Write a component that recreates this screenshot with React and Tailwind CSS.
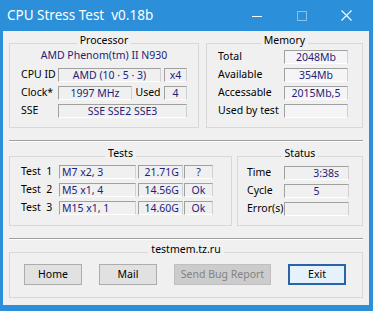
import React from 'react';

const Field = ({ className = '', children }) => (
  <div
    className={`h-[14px] border border-t-[#a0a0a0] border-l-[#a0a0a0] border-r-[#d0d0d0] border-b-white leading-[12px] text-[#1e1e78] whitespace-nowrap overflow-hidden ${className}`}
  >
    {children}
  </div>
);

const Group = ({ title, className = '', children }) => (
  <div className={`border border-[#d8d8d8] ${className}`}>
    <div className="-mt-[11px] mx-auto w-fit bg-[#f0f0f0] px-[3px] leading-[14px] text-black">{title}</div>
    {children}
  </div>
);

const Separator = ({ className = '' }) => (
  <div className={`h-[2px] border-t border-t-[#a0a0a0] border-b border-b-white ${className}`} />
);

const Button = ({ className = '', children }) => (
  <div className={`h-[21px] flex items-center justify-center border ${className}`}>{children}</div>
);

const App = () => {
  const tests = [
    ['Test  1', 'M7 x2, 3', '21.71G', '?'],
    ['Test  2', 'M5 x1, 4', '14.56G', 'Ok'],
    ['Test  3', 'M15 x1, 1', '14.60G', 'Ok'],
  ];
  const memory = [
    ['Total', '2048Mb'],
    ['Available', '354Mb'],
    ['Accessable', '2015Mb,5'],
    ['Used by test', ''],
  ];

  return (
    <div className="w-[373px] h-[311px] bg-[#2b8fd9] font-['Noto_Sans',sans-serif] text-[10.5px] text-black overflow-hidden">
      {/* Title bar */}
      <div className="h-[31px] flex items-center text-white">
        <div className="pl-[7px] text-[13.5px] flex-1 whitespace-pre">CPU Stress Test  v0.18b</div>
        <div className="flex items-center h-full mr-[4px]">
          <div className="w-[45px] h-full flex items-center justify-center">
            <svg width="10" height="10" viewBox="0 0 10 10"><line x1="0" y1="5.5" x2="10" y2="5.5" stroke="white" strokeWidth="1" /></svg>
          </div>
          <div className="w-[45px] h-full flex items-center justify-center">
            <svg width="10" height="10" viewBox="0 0 10 10"><rect x="0.5" y="0.5" width="9" height="9" fill="none" stroke="rgba(255,255,255,0.45)" strokeWidth="1" /></svg>
          </div>
          <div className="w-[45px] h-full flex items-center justify-center">
            <svg width="11" height="11" viewBox="0 0 11 11"><path d="M0.5 0.5 L10.5 10.5 M10.5 0.5 L0.5 10.5" stroke="white" strokeWidth="1.1" /></svg>
          </div>
        </div>
      </div>

      {/* Client area */}
      <div className="ml-[3px] mr-[4px] h-[274px] bg-[#f0f0f0] px-[6px] pt-[12px]">
        <div className="flex gap-[7px]">
          <Group title="Processor" className="w-[190px] h-[85px]">
            <div className="mt-[1px] leading-[14px] text-center text-[#1e1e78]">AMD Phenom(tm) II N930</div>
            <div className="mt-[6px] pl-[11px] flex flex-col gap-[4px]">
              <div className="flex items-center h-[14px]">
                <div className="w-[37px]">CPU ID</div>
                <Field className="w-[103px] text-center">AMD  (10 · 5 · 3)</Field>
                <Field className="w-[23px] ml-[3px] text-center">x4</Field>
              </div>
              <div className="flex items-center h-[14px]">
                <div className="w-[37px]">Clock*</div>
                <Field className="w-[74px] text-center">1997 MHz</Field>
                <div className="w-[32px] text-center">Used</div>
                <Field className="w-[23px] text-center">4</Field>
              </div>
              <div className="flex items-center h-[14px]">
                <div className="w-[37px]">SSE</div>
                <Field className="w-[129px] text-center">SSE SSE2 SSE3</Field>
              </div>
            </div>
          </Group>
          <Group title="Memory" className="w-[157px] h-[85px]">
            <div className="mt-[3px] pl-[11px] flex flex-col gap-[4px]">
              {memory.map(([label, value]) => (
                <div key={label} className="flex items-center h-[14px]">
                  <div className="w-[66px] whitespace-nowrap">{label}</div>
                  <Field className="w-[64px] text-center bg-[#f5f5f7]">{value}</Field>
                </div>
              ))}
            </div>
          </Group>
        </div>

        <Separator className="mt-[12px]" />

        <div className="mt-[14px] flex gap-[5px]">
          <Group title="Tests" className="w-[223px] h-[70px]">
            <div className="mt-[5px] pl-[11px] flex flex-col gap-[4px]">
              {tests.map(([label, mode, speed, state]) => (
                <div key={label} className="flex items-center h-[14px]">
                  <div className="w-[38px] whitespace-pre">{label}</div>
                  <Field className="w-[77px] pl-[2px]">{mode}</Field>
                  <Field className="w-[45px] ml-[2px] text-right pr-[3px]">{speed}</Field>
                  <Field className="w-[29px] ml-[1px] text-center">{state}</Field>
                </div>
              ))}
            </div>
          </Group>
          <Group title="Status" className="w-[126px] h-[70px]">
            <div className="mt-[6px] pl-[9px] flex flex-col gap-[4px]">
              <div className="flex items-center h-[14px]">
                <div className="w-[37px]">Time</div>
                <Field className="w-[65px] text-right pr-[9px]">3:38s</Field>
              </div>
              <div className="flex items-center h-[14px]">
                <div className="w-[37px]">Cycle</div>
                <Field className="w-[65px] text-center">5</Field>
              </div>
              <div className="flex items-center h-[14px]">
                <div className="w-[37px] whitespace-nowrap">Error(s)</div>
                <Field className="w-[65px]"></Field>
              </div>
            </div>
          </Group>
        </div>

        <Separator className="mt-[12px]" />

        <Group title="testmem.tz.ru" className="mt-[12px] h-[46px]">
          <div className="mt-[8px] pl-[14px] flex gap-[17px]">
            <Button className="w-[58px] bg-[#e1e1e1] border-[#adadad]">Home</Button>
            <Button className="w-[58px] bg-[#e1e1e1] border-[#adadad]">Mail</Button>
            <Button className="w-[97px] bg-[#cccccc] border-[#bfbfbf] text-[#838383]">Send Bug Report</Button>
            <Button className="w-[58px] bg-[#e5f1fb] border-2 border-[#2a64a8]">Exit</Button>
          </div>
        </Group>
      </div>
    </div>
  );
};

export default App;
